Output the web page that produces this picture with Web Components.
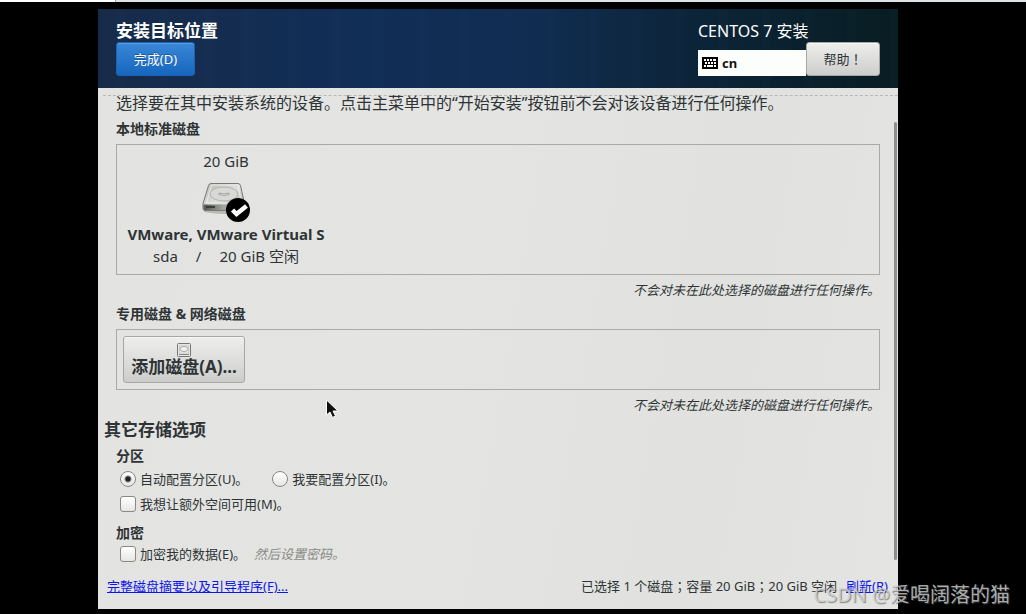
<!DOCTYPE html>
<html lang="zh-CN">
<head>
<meta charset="utf-8">
<title>安装目标位置</title>
<style>
html, body { margin: 0; background: #000; }
body { font-family: "Noto Sans", "Noto Sans CJK SC", sans-serif; font-size: 13px; line-height: 20px; color: #2e3436; }
</style>
</head>
<body>
<installer-screen></installer-screen>
<script>
function define(name, html) {
  const template = document.createElement('template');
  template.innerHTML = html;
  customElements.define(name, class extends HTMLElement {
    constructor() {
      super();
      this.attachShadow({ mode: 'open' }).append(template.content.cloneNode(true));
    }
  });
}

define('gtk-button', `
<style>
:host { display: block; }
button { display: flex; flex-direction: column; align-items: center; justify-content: center; box-sizing: border-box; width: 100%; min-height: 34px; margin: 0; padding: 0 8px; border: 1px solid #a5a7a2; border-radius: 3px; background: linear-gradient(#eeeeed, #cdcecb); box-shadow: inset 0 1px #f8f8f7; color: #2e3436; font: inherit; line-height: 20px; white-space: nowrap; }
:host([primary]) button { border-color: #1b62b4; background: linear-gradient(#3a87d6, #1566be); box-shadow: inset 0 1px #5b9ee0; color: #fff; text-shadow: 0 -1px #1a569a; }
:host([large]) button { height: 47px; font-size: 17px; font-weight: bold; }
</style>
<button type="button"><slot></slot></button>`);

define('keyboard-layout', `
<style>
:host { display: flex; align-items: center; gap: 4px; box-sizing: border-box; height: 26px; padding: 0 4px; background: #fcfefb; color: #111; font-weight: bold; }
svg { display: block; }
</style>
<svg width="16" height="12" viewBox="0 0 16 12" aria-hidden="true"><path fill="#000" d="M0 0h16v12H0z"/><path fill="#fff" d="M2 2h2v2H2zM5 2h2v2H5zM8 2h2v2H8zM11 2h3v2h-3zM3 5h2v2H3zM6 5h2v2H6zM9 5h2v2H9zM12 5h2v2h-2zM2 8h2v2H2zM5 8h6v2H5zM12 8h2v2h-2z"/></svg>
<slot></slot>`);

define('spoke-header', `
<style>
:host { display: flex; justify-content: space-between; padding: 11px 18px 12px; background: repeating-linear-gradient(90deg, transparent 0 17px, #2a609508 20px 26px, transparent 30px 43px), linear-gradient(90deg, #172b49, #112e57 32%, #102c50 55%, #0c2438 75%, #081d22); color: #fff; }
h1, p { margin: 0; line-height: 22px; }
h1 { font-size: 17px; }
p { font-size: 16px; }
.done { width: 79px; }
.side { width: 182px; }
.row { display: flex; align-items: flex-end; }
keyboard-layout { flex: 1; }
.help { width: 74px; }
.mark { font-family: "Noto Sans CJK TC", sans-serif; }
</style>
<div><h1>安装目标位置</h1><gtk-button primary class="done">完成(D)</gtk-button></div>
<div class="side"><p>CENTOS 7 安装</p>
<div class="row"><keyboard-layout>cn</keyboard-layout><gtk-button class="help"><span>帮助<span class="mark" lang="zh-TW">！</span></span></gtk-button></div></div>`);

define('disk-card', `
<style>
:host { display: flex; flex-direction: column; align-items: center; width: 196px; font-size: 15px; line-height: 22px; white-space: nowrap; }
svg { display: block; margin: 10px 0 0; }
strong { line-height: 20px; }
.facts { display: flex; gap: 18px; line-height: 24px; }
</style>
<slot name="capacity"></slot>
<svg width="48" height="42" viewBox="0 0 48 42" aria-hidden="true">
<defs><linearGradient id="top" x2="1" y2="1"><stop stop-color="#b8bab6"/><stop offset=".5" stop-color="#dfe0dd"/><stop offset="1" stop-color="#a8aaa6"/></linearGradient>
<linearGradient id="front"><stop stop-color="#555753"/><stop offset=".5" stop-color="#a5a7a2"/><stop offset="1" stop-color="#60625e"/></linearGradient></defs>
<path d="M2 30q20 4 40 0v-2H2z" fill="#b9bab7"/>
<path d="M9 1.500h27q2 0 2.500 2l4 18v5q0 2-2 2H3q-2 0-2-2v-5l5.500-18q.5-2 2.500-2z" fill="url(#top)" stroke="#777975"/>
<path d="M1.500 22.500h41v4q0 1.500-2 1.500h-37q-2 0-2-1.500z" fill="url(#front)"/>
<path d="M4 24h9v2H4z" fill="#3c3e3a"/>
<path d="M9.500 3h26.500l3.500 18h-35z" fill="none" stroke="#f2f3f0" stroke-width=".8"/>
<ellipse cx="22" cy="12" rx="14" ry="7" fill="#d8d9d6" stroke="#b2b4b0"/>
<path d="M17 11q5 2 10 0v1.500q-5 2-10 0z" fill="#eee" stroke="#90928d" stroke-width=".8"/>
<circle cx="36" cy="28" r="12" fill="#000"/>
<path d="m30.500 28 4 4 10-8" fill="none" stroke="#fff" stroke-width="4.500"/>
</svg>
<strong><slot name="model"></slot></strong>
<div class="facts"><slot></slot></div>`);

define('disk-shelf', `
<style>
:host { display: block; }
h2 { margin: 0 0 5px; font-size: 14px; line-height: 20px; }
.frame { box-sizing: border-box; border: 1px solid #a8aaa7; padding: 6px; display: flex; }
:host([tall]) .frame { padding: 5px 11px 6px; }
p { margin: 5px 0 0; text-align: right; font-style: italic; line-height: 20px; }
</style>
<h2><slot name="title"></slot></h2>
<div class="frame"><slot></slot></div>
<p>不会对未在此处选择的磁盘进行任何操作。</p>`);

define('storage-options', `
<style>
:host { display: block; }
h2, h3 { margin: 0; line-height: 20px; }
h2 { font-size: 17px; }
h3 { font-size: 14px; margin: 6px 0 3px 12px; }
.row { display: flex; gap: 24px; padding-left: 16px; }
.row + .row { margin-top: 5px; }
.row + h3 { margin-top: 9px; margin-bottom: 1px; }
label { display: flex; align-items: center; gap: 4px; white-space: nowrap; }
input { appearance: none; flex: none; box-sizing: border-box; width: 16px; height: 16px; margin: 0; border: 1px solid #878985; border-radius: 3px; background: linear-gradient(#fff, #e6e6e4); }
input[type=radio] { border-radius: 50%; }
input[type=radio]:checked { background: radial-gradient(circle, #222 0 2px, transparent 4px), linear-gradient(#fff, #e6e6e4); }
.row.crypt { gap: 8px; }
em { color: #888a86; }
</style>
<h2>其它存储选项</h2>
<h3>分区</h3>
<div class="row"><label><input type="radio" name="part" checked>自动配置分区(U)。</label><label><input type="radio" name="part">我要配置分区(I)。</label></div>
<div class="row"><label><input type="checkbox">我想让额外空间可用(M)。</label></div>
<h3>加密</h3>
<div class="row crypt"><label><input type="checkbox">加密我的数据(E)。</label><em>然后设置密码。</em></div>`);

define('spoke-footer', `
<style>
:host { display: flex; justify-content: space-between; padding: 0 10px 13px 9px; white-space: nowrap; }
a { color: #0d16e8; text-decoration: underline; }
.status { display: flex; gap: 9px; }
i { font-style: normal; font-family: "Noto Sans CJK TC", sans-serif; }
</style>
<a href="#summary">完整磁盘摘要以及引导程序(F)...</a>
<div class="status"><span>已选择 1 个磁盘<i lang="zh-TW">；</i>容量 20 GiB<i lang="zh-TW">；</i>20 GiB 空闲</span><a href="#refresh">刷新(R)</a></div>`);

define('installer-screen', `
<style>
:host { display: block; position: relative; min-height: 614px; }
.strip { height: 2px; background: linear-gradient(90deg, #fff 0 115px, #9a9c9e 115px 116px, #dfe3e6 116px); }
.window { margin: 7px 128px 0 98px; background: linear-gradient(100deg, #e3e3e1, #e4e5e2 45%, #e1e2df 75%, #e4e4e2); }
.intro { margin: 7px 0 9px 5px; padding-left: 13px; border-top: 1px dashed #bcb4bc; font-size: 16px; line-height: 14px; white-space: nowrap; }
.body { display: grid; grid-template-columns: 1fr 3px; padding-right: 1px; margin-bottom: 12px; }
.bar { margin: 3px 0 4px; border-radius: 2px; background: #8d8f8c; }
.list { padding-right: 14px; }
disk-shelf { margin: 0 0 4px 18px; }
disk-shelf + storage-options { margin: 5px 0 0 6px; }
gtk-button { width: 122px; }
main { display: flow-root; }
.cursor { position: absolute; left: 325px; top: 399px; }
.credit { position: absolute; right: 16px; bottom: 5px; font-size: 20px; line-height: 28px; color: #d2d4d5cc; text-shadow: 1px 1px 1px #555a; white-space: nowrap; }
</style>
<div class="strip"></div>
<div class="window">
<spoke-header></spoke-header>
<main>
<p class="intro">选择要在其中安装系统的设备。点击主菜单中的“开始安装”按钮前不会对该设备进行任何操作。</p>
<div class="body"><div class="list">
<disk-shelf tall><span slot="title">本地标准磁盘</span>
<disk-card><span slot="capacity">20 GiB</span><span slot="model">VMware, VMware Virtual S</span><span>sda</span><span>/</span><span>20 GiB 空闲</span></disk-card></disk-shelf>
<disk-shelf><span slot="title">专用磁盘 &amp; 网络磁盘</span>
<gtk-button large><svg width="14" height="14" viewBox="0 0 14 14" aria-hidden="true"><rect x=".5" y=".5" width="13" height="13" rx="1" fill="#e4e5e3" stroke="#777975"/><path d="M2.500 3h9v7h-9z" fill="#f2f2f0" stroke="#bbb" stroke-width=".6"/><ellipse cx="7" cy="6" rx="4" ry="2.500" fill="none" stroke="#aaa"/><path d="M2 11.500h10" stroke="#888"/></svg>添加磁盘(A)...</gtk-button></disk-shelf>
<storage-options></storage-options>
</div><div class="bar"></div></div>
<spoke-footer></spoke-footer>
</main>
</div>
<svg class="cursor" width="16" height="21" viewBox="0 0 16 21" aria-hidden="true"><path d="M1.500 1v15l3.500-3 2.500 5.500 3-1.500-2.500-5h5z" fill="#111" stroke="#fff"/></svg>
<div class="credit">CSDN @爱喝阔落的猫</div>`);
</script>
</body>
</html>
